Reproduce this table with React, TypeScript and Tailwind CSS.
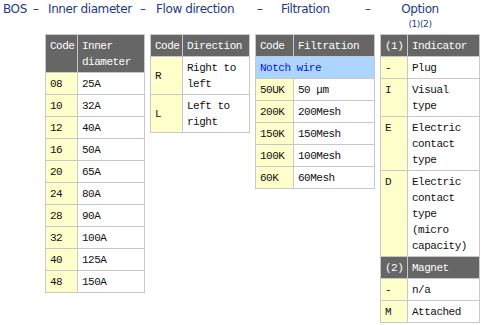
import React from "react";

type Row = { code: string; text: string; dark?: boolean; blue?: boolean };

const cellBase = "border border-[#c8c8c8] pl-[4px] pr-[2px] pt-[3px] pb-[2px]";

function SpecTable({
  width,
  codeWidth,
  head,
  rows,
  codeTop,
  headTop,
}: {
  width: number;
  codeWidth: number;
  head: [string, string];
  rows: Row[];
  codeTop?: boolean;
  headTop?: boolean;
}) {
  return (
    <table
      className="table-fixed border-collapse border border-[#c8c8c8] font-[family-name:Liberation_Mono,monospace] text-[11px] leading-4 tracking-[-0.5px] text-[#111]"
      style={{ width }}
    >
      <colgroup>
        <col style={{ width: codeWidth }} />
        <col />
      </colgroup>
      <thead>
        <tr className="bg-[#666] text-white">
          <th className={`${cellBase} text-left font-normal ${headTop ? "align-top" : ""}`}>{head[0]}</th>
          <th className={`${cellBase} text-left font-normal align-top`}>{head[1]}</th>
        </tr>
      </thead>
      <tbody>
        {rows.map((r, i) =>
          r.blue ? (
            <tr key={i} className="bg-[#acd6ff]">
              <td colSpan={2} className={`${cellBase} text-[#0a14e6]`}>
                {r.text}
              </td>
            </tr>
          ) : r.dark ? (
            <tr key={i} className="bg-[#666] text-white">
              <td className={cellBase}>{r.code}</td>
              <td className={cellBase}>{r.text}</td>
            </tr>
          ) : (
            <tr key={i}>
              <td className={`${cellBase} bg-[#ffffcc] ${codeTop ? "align-top" : "align-middle"}`}>{r.code}</td>
              <td className={`${cellBase} bg-white`}>{r.text}</td>
            </tr>
          )
        )}
      </tbody>
    </table>
  );
}

const diameters: Row[] = [
  ["08", "25A"],
  ["10", "32A"],
  ["12", "40A"],
  ["16", "50A"],
  ["20", "65A"],
  ["24", "80A"],
  ["28", "90A"],
  ["32", "100A"],
  ["40", "125A"],
  ["48", "150A"],
].map(([code, text]) => ({ code, text }));

const directions: Row[] = [
  { code: "R", text: "Right to left" },
  { code: "L", text: "Left to right" },
];

const filters: Row[] = [
  { code: "", text: "Notch wire", blue: true },
  { code: "50UK", text: "50 μm" },
  { code: "200K", text: "200Mesh" },
  { code: "150K", text: "150Mesh" },
  { code: "100K", text: "100Mesh" },
  { code: "60K", text: "60Mesh" },
];

const options: Row[] = [
  { code: "-", text: "Plug" },
  { code: "I", text: "Visual type" },
  { code: "E", text: "Electric contact type" },
  { code: "D", text: "Electric contact type (micro capacity)" },
  { code: "(2)", text: "Magnet", dark: true },
  { code: "-", text: "n/a" },
  { code: "M", text: "Attached" },
];

export default function App() {
  return (
    <div className="w-[484px] h-[325px] bg-white overflow-hidden">
      <div className="flex h-[34px] pl-[3px] pt-[1px] font-[family-name:DejaVu_Sans,sans-serif] text-[12px] leading-4 tracking-[-0.4px] text-[#1e3a8a] whitespace-nowrap">
        <span className="w-[30px]">BOS</span>
        <span className="w-[15px]">–</span>
        <span className="w-[92px]">Inner diameter</span>
        <span className="w-[16px]">–</span>
        <span className="w-[101px]">Flow direction</span>
        <span className="w-[24px]">–</span>
        <span className="w-[84px]">Filtration</span>
        <span className="w-[35px]">–</span>
        <div className="flex w-[40px] flex-col items-center">
          <span>Option</span>
          <span className="mt-[2px] text-[9px] leading-[10px]">(1)(2)</span>
        </div>
      </div>
      <div className="flex items-start gap-[5px] pl-[45px]">
        <SpecTable width={100} codeWidth={32} head={["Code", "Inner diameter"]} rows={diameters} headTop />
        <SpecTable width={100} codeWidth={32} head={["Code", "Direction"]} rows={directions} />
        <SpecTable width={120} codeWidth={38} head={["Code", "Filtration"]} rows={filters} />
        <SpecTable width={100} codeWidth={27} head={["(1)", "Indicator"]} rows={options} codeTop />
      </div>
    </div>
  );
}
